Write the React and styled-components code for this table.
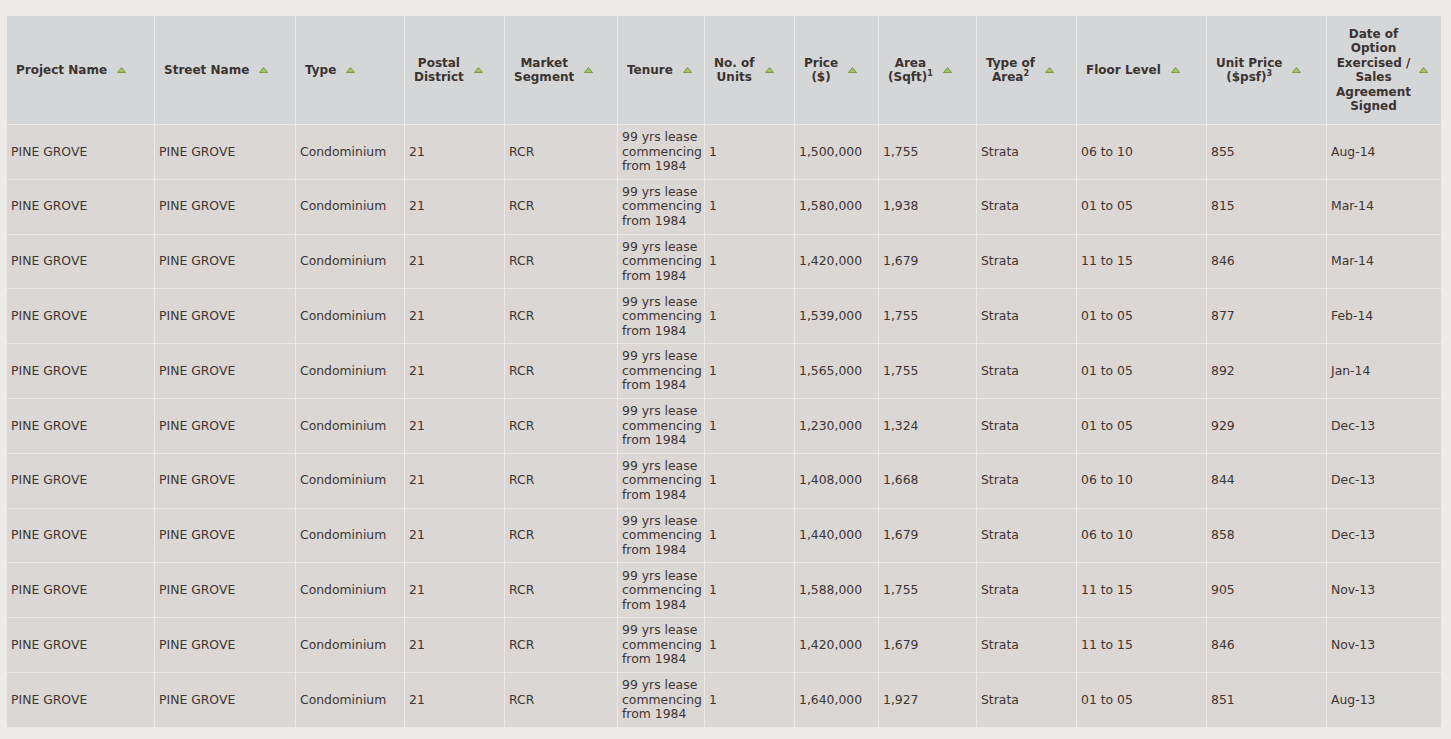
import React from 'react';
import styled, { createGlobalStyle } from 'styled-components';

const GlobalStyle = createGlobalStyle`
  body {
    margin: 0;
    background: #eeece9;
    font-family: "DejaVu Sans", Verdana, sans-serif;
  }
`;

const Page = styled.div`
  padding: 16px 10px 13px 6px;
`;

const Table = styled.table`
  width: 1435px;
  table-layout: fixed;
  border-collapse: collapse;
`;

const HeadCell = styled.th`
  height: 108px;
  padding: 0 0 0 9px;
  background: #d5d6d8;
  border: 1px solid #ebeae8;
  border-top: none;
  vertical-align: middle;
`;

const HeadInner = styled.div`
  display: flex;
  align-items: center;
  gap: ${(p) => p.$gap || 10}px;
`;

const Label = styled.span`
  font-size: 12px;
  font-weight: bold;
  line-height: 14.5px;
  color: #3b3330;
  text-align: center;
  white-space: nowrap;

  sup {
    font-size: 8px;
    line-height: 0;
    vertical-align: 5px;
  }
`;

const Cell = styled.td`
  height: 53.8px;
  padding: 0 4px 0 4px;
  background: #dbd7d4;
  border: 1px solid #ebe9e7;
  font-size: 12.4px;
  line-height: 14.5px;
  color: #3d3532;
  vertical-align: middle;
  white-space: ${(p) => (p.$wrap ? 'normal' : 'nowrap')};
`;

const Arrow = () => (
  <svg width="9" height="6" viewBox="0 0 9 6">
    <path d="M4.5 0.5 L8.5 5.5 L0.5 5.5 Z" fill="#a4c35e" stroke="#6f8c3a" strokeWidth="0.8" />
  </svg>
);

const columns = [
  { w: 148, label: <>Project Name</> },
  { w: 141, label: <>Street Name</> },
  { w: 109, label: <>Type</> },
  { w: 100, label: <>Postal<br />District</> },
  { w: 113, label: <>Market<br />Segment</> },
  { w: 87, label: <>Tenure</> },
  { w: 90, label: <>No. of<br />Units</> },
  { w: 84, label: <>Price<br />($)</> },
  { w: 98, label: <>Area<br />(Sqft)<sup>1</sup></> },
  { w: 100, label: <>Type of<br />Area<sup>2</sup></> },
  { w: 130, label: <>Floor Level</> },
  { w: 120, label: <>Unit Price<br />($psf)<sup>3</sup></> },
  { w: 115, label: <>Date of<br />Option<br />Exercised /<br />Sales<br />Agreement<br />Signed</> },
];

const rows = [
  ['1,500,000', '1,755', '06 to 10', '855', 'Aug-14'],
  ['1,580,000', '1,938', '01 to 05', '815', 'Mar-14'],
  ['1,420,000', '1,679', '11 to 15', '846', 'Mar-14'],
  ['1,539,000', '1,755', '01 to 05', '877', 'Feb-14'],
  ['1,565,000', '1,755', '01 to 05', '892', 'Jan-14'],
  ['1,230,000', '1,324', '01 to 05', '929', 'Dec-13'],
  ['1,408,000', '1,668', '06 to 10', '844', 'Dec-13'],
  ['1,440,000', '1,679', '06 to 10', '858', 'Dec-13'],
  ['1,588,000', '1,755', '11 to 15', '905', 'Nov-13'],
  ['1,420,000', '1,679', '11 to 15', '846', 'Nov-13'],
  ['1,640,000', '1,927', '01 to 05', '851', 'Aug-13'],
];

export default function App() {
  return (
    <Page>
      <GlobalStyle />
      <Table>
        <colgroup>
          {columns.map((c, i) => (
            <col key={i} style={{ width: c.w }} />
          ))}
        </colgroup>
        <thead>
          <tr>
            {columns.map((c, i) => (
              <HeadCell key={i}>
                <HeadInner $gap={i === columns.length - 1 ? 8 : 10}>
                  <Label>{c.label}</Label>
                  <Arrow />
                </HeadInner>
              </HeadCell>
            ))}
          </tr>
        </thead>
        <tbody>
          {rows.map((r, i) => (
            <tr key={i}>
              <Cell>PINE GROVE</Cell>
              <Cell>PINE GROVE</Cell>
              <Cell>Condominium</Cell>
              <Cell>21</Cell>
              <Cell>RCR</Cell>
              <Cell $wrap>99 yrs lease commencing from 1984</Cell>
              <Cell>1</Cell>
              <Cell>{r[0]}</Cell>
              <Cell>{r[1]}</Cell>
              <Cell>Strata</Cell>
              <Cell>{r[2]}</Cell>
              <Cell>{r[3]}</Cell>
              <Cell>{r[4]}</Cell>
            </tr>
          ))}
        </tbody>
      </Table>
    </Page>
  );
}
